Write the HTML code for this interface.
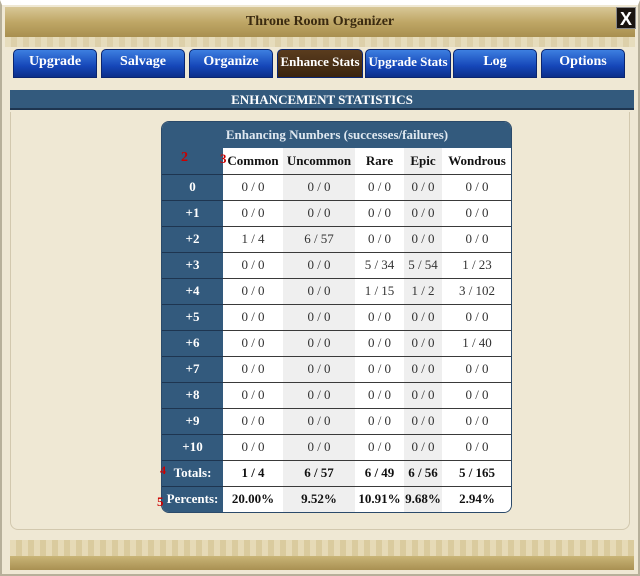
<!DOCTYPE html>
<html><head><style>
*{margin:0;padding:0;box-sizing:border-box}
body{width:640px;height:576px;overflow:hidden;background:#efe8d4;font-family:"Liberation Serif",serif;position:relative}
.frame{position:absolute;left:0;top:0;width:640px;height:576px;border:2px solid #b7b09a;border-top:5px solid #fff}
.title{position:absolute;left:5px;top:7px;width:630px;height:30px;background:linear-gradient(#d8c797,#bfa766 50%,#a88f4f);text-align:center;font-weight:bold;font-size:14px;line-height:30px;color:#3a2a10}
.x{position:absolute;left:616px;top:7px;width:20px;height:22px;background:#1a1410;color:#fff;font:bold 18px "Liberation Sans",sans-serif;text-align:center;line-height:22px;border:1px solid #888}
.orn{position:absolute;left:5px;top:37px;width:630px;height:10px;background:repeating-linear-gradient(90deg,#e6dcbc 0 6px,#ddd0aa 6px 12px)}
.tab{position:absolute;top:49px;height:29px;background:linear-gradient(#3d7fe0,#1546b8 60%,#0c2f8a);color:#fff;font-weight:bold;font-size:14px;text-align:center;line-height:24px;border-radius:5px 5px 0 0;border:1px solid #0a2570}
.tab.on{background:linear-gradient(#5a3c1e,#3a240e);}
.sec{position:absolute;left:10px;top:90px;width:624px;height:20px;background:#335a7d;border-bottom:2px solid #1e3550;color:#fff;font-weight:bold;font-size:13px;text-align:center;line-height:20px}
.panel{position:absolute;left:10px;top:112px;width:620px;height:418px;border:1px solid #d2c8ae;border-top:none;border-radius:0 0 8px 8px}
.wrap{position:absolute;left:161px;top:121px;width:351px;height:392px;border-radius:8px;overflow:hidden;border:1px solid #2b4a6a}
table{width:350px;border-collapse:collapse;font-size:13px}
th.h{background:#335a7d;color:#dfe8f0;height:26px;font-size:13px}
td{height:26px;text-align:center;border-bottom:1px solid #3a3a3a;color:#333;font-size:13px}
td.l{background:#335a7d;color:#fff;font-weight:bold;width:61px;border-bottom:1px solid #1e3550}
td.g{background:#efefef}
td.w{background:#fff}
tr.hd td.w,tr.hd td.g{font-weight:bold;color:#111}
tr.b td{font-weight:bold;color:#111}
.r{color:#c00;font-weight:bold;position:absolute}
.bot1{position:absolute;left:10px;top:540px;width:624px;height:16px;background:repeating-linear-gradient(90deg,#e6dab6 0 6px,#dacb9e 6px 12px)}
.bot2{position:absolute;left:10px;top:556px;width:624px;height:14px;background:linear-gradient(#c9b577,#a99052)}
</style></head><body>
<div class="frame"></div>
<div class="title">Throne Room Organizer</div>
<div class="x">X</div>
<div class="orn"></div>
<div class="tab" style="left:13px;width:84px">Upgrade</div>
<div class="tab" style="left:101px;width:84px">Salvage</div>
<div class="tab" style="left:189px;width:84px">Organize</div>
<div class="tab on" style="left:277px;width:86px;font-size:13px">Enhance Stats</div>
<div class="tab" style="left:365px;width:86px;font-size:13px">Upgrade Stats</div>
<div class="tab" style="left:453px;width:84px">Log</div>
<div class="tab" style="left:541px;width:84px">Options</div>
<div class="sec">ENHANCEMENT STATISTICS</div>
<div class="panel"></div>
<div class="wrap"><table>
<tr><th class="h" colspan="6">Enhancing Numbers (successes/failures)</th></tr>
<tr class="hd"><td class="l"></td><td class="w" style="width:60px">Common</td><td class="g" style="width:72px">Uncommon</td><td class="w" style="width:49px">Rare</td><td class="g" style="width:38px">Epic</td><td class="w">Wondrous</td></tr>
<tr><td class="l">0</td><td class="w">0 / 0</td><td class="g">0 / 0</td><td class="w">0 / 0</td><td class="g">0 / 0</td><td class="w">0 / 0</td></tr>
<tr><td class="l">+1</td><td class="w">0 / 0</td><td class="g">0 / 0</td><td class="w">0 / 0</td><td class="g">0 / 0</td><td class="w">0 / 0</td></tr>
<tr><td class="l">+2</td><td class="w">1 / 4</td><td class="g">6 / 57</td><td class="w">0 / 0</td><td class="g">0 / 0</td><td class="w">0 / 0</td></tr>
<tr><td class="l">+3</td><td class="w">0 / 0</td><td class="g">0 / 0</td><td class="w">5 / 34</td><td class="g">5 / 54</td><td class="w">1 / 23</td></tr>
<tr><td class="l">+4</td><td class="w">0 / 0</td><td class="g">0 / 0</td><td class="w">1 / 15</td><td class="g">1 / 2</td><td class="w">3 / 102</td></tr>
<tr><td class="l">+5</td><td class="w">0 / 0</td><td class="g">0 / 0</td><td class="w">0 / 0</td><td class="g">0 / 0</td><td class="w">0 / 0</td></tr>
<tr><td class="l">+6</td><td class="w">0 / 0</td><td class="g">0 / 0</td><td class="w">0 / 0</td><td class="g">0 / 0</td><td class="w">1 / 40</td></tr>
<tr><td class="l">+7</td><td class="w">0 / 0</td><td class="g">0 / 0</td><td class="w">0 / 0</td><td class="g">0 / 0</td><td class="w">0 / 0</td></tr>
<tr><td class="l">+8</td><td class="w">0 / 0</td><td class="g">0 / 0</td><td class="w">0 / 0</td><td class="g">0 / 0</td><td class="w">0 / 0</td></tr>
<tr><td class="l">+9</td><td class="w">0 / 0</td><td class="g">0 / 0</td><td class="w">0 / 0</td><td class="g">0 / 0</td><td class="w">0 / 0</td></tr>
<tr><td class="l">+10</td><td class="w">0 / 0</td><td class="g">0 / 0</td><td class="w">0 / 0</td><td class="g">0 / 0</td><td class="w">0 / 0</td></tr>
<tr class="b"><td class="l" style="color:#fff">Totals:</td><td class="w">1 / 4</td><td class="g">6 / 57</td><td class="w">6 / 49</td><td class="g">6 / 56</td><td class="w">5 / 165</td></tr>
<tr class="b"><td class="l" style="color:#fff;border-bottom:none">Percents:</td><td class="w" style="border-bottom:none">20.00%</td><td class="g" style="border-bottom:none">9.52%</td><td class="w" style="border-bottom:none">10.91%</td><td class="g" style="border-bottom:none">9.68%</td><td class="w" style="border-bottom:none">2.94%</td></tr>
</table></div>
<span class="r" style="left:181px;top:150px;font-size:14px">2</span>
<span class="r" style="left:220px;top:151px;font-size:13px">3</span>
<span class="r" style="left:160px;top:463px;font-size:12px">4</span>
<span class="r" style="left:157px;top:494px;font-size:13px">5</span>
<div class="bot1"></div><div class="bot2"></div>
</body></html>
